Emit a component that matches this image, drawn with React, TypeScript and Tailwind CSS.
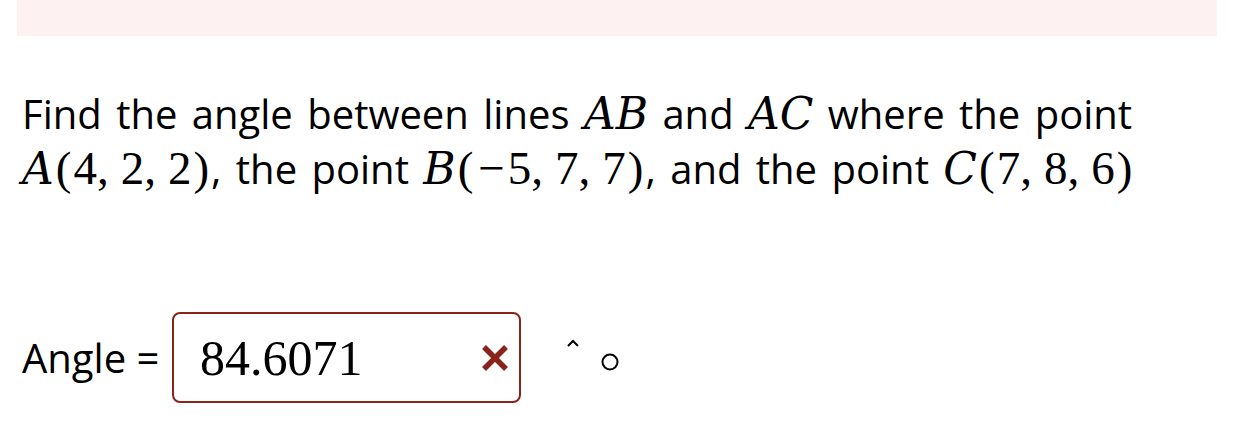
import React from 'react';

const serif = { fontFamily: '"Liberation Serif", "Times New Roman", serif' };
const italicSerif = { fontFamily: '"DejaVu Serif", "Liberation Serif", serif' };

const M: React.FC<{ children: React.ReactNode; italic?: boolean }> = ({ children, italic }) =>
  italic ? (
    <span className="text-[44px] italic" style={italicSerif}>
      {children}
    </span>
  ) : (
    <span className="text-[47px]" style={serif}>
      {children}
    </span>
  );

const Point: React.FC<{ name: string; coords: string[] }> = ({ name, coords }) => (
  <span className="whitespace-nowrap [word-spacing:0]">
    <M italic>{name}</M>
    <M>
      <span className="px-[2px]">(</span>
      {coords.map((c, i) => (
        <React.Fragment key={i}>
          {i > 0 && (
            <>
              ,<span className="inline-block w-[12px]" />
            </>
          )}
          {c.startsWith('−') ? (
            <>
              <span className="px-[3px]">−</span>
              {c.slice(1)}
            </>
          ) : (
            c
          )}
        </React.Fragment>
      ))}
      <span className="px-[2px]">)</span>
    </M>
  </span>
);

export default function App() {
  return (
    <div className="w-[1248px] h-[422px] bg-white text-black overflow-hidden">
      <div className="mx-[17px] w-[1200px] h-[36px] bg-[#fdf2f1]" />
      <div
        className="pl-[22px] pt-[50px] text-[40px] leading-[55px]"
        style={{ fontFamily: '"Open Sans", "Noto Sans", sans-serif' }}
      >
        <p className="whitespace-nowrap [word-spacing:4px]">
          Find the angle between lines <M italic>AB</M> and <M italic>AC</M> where the point
          <br />
          <Point name="A" coords={['4', '2', '2']} />, the point <Point name="B" coords={['−5', '7', '7']} />, and
          the point <Point name="C" coords={['7', '8', '6']} />
        </p>
        <div className="mt-[116px] flex items-center">
          <span className="w-[150px]">Angle =</span>
          <div className="w-[349px] h-[91px] border-2 border-[#8a231b] rounded-[8px] flex items-center pl-[26px] pr-[9px]">
            <span className="text-[50px] flex-1 leading-none" style={serif}>
              84.6071
            </span>
            <svg width="30" height="30" viewBox="0 0 30 30">
              <path d="M4 4 L26 26 M26 4 L4 26" stroke="#8a231b" strokeWidth="5.5" />
            </svg>
          </div>
          <div className="self-start flex">
            <svg width="14" height="10" viewBox="0 0 14 10" className="ml-[45px] mt-[26px]">
              <path d="M2 8 L7 3 L12 8" stroke="black" strokeWidth="2" fill="none" />
            </svg>
            <svg width="20" height="20" viewBox="0 0 20 20" className="ml-[20px] mt-[40px]">
              <circle cx="10" cy="10" r="7.5" stroke="black" strokeWidth="2" fill="none" />
            </svg>
          </div>
        </div>
      </div>
    </div>
  );
}
